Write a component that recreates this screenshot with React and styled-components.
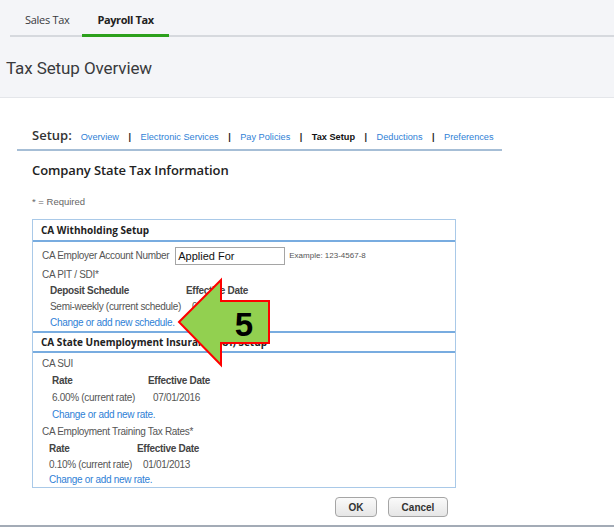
import React from 'react';
import styled, { createGlobalStyle } from 'styled-components';

const GlobalStyle = createGlobalStyle`
  body {
    margin: 0;
    background: #fff;
    font-family: "Liberation Sans", Arial, sans-serif;
    overflow: hidden;
  }
`;

const Page = styled.div`
  position: relative;
  width: 614px;
  height: 527px;
  overflow: hidden;
  border-bottom: 2px solid #a3abb6;
  box-sizing: border-box;
`;

const TopBand = styled.div`
  background: #f4f5f8;
  height: 98px;
  border-bottom: 1px solid #e4e6ea;
  box-sizing: border-box;
`;

const TabRow = styled.div`
  display: flex;
  margin-left: 10px;
  height: 37px;
  border-bottom: 2px solid #d6d9de;
  box-sizing: border-box;
`;

const Tab = styled.div`
  display: flex;
  align-items: center;
  padding: 5px ${p => (p.active ? '15px' : '13px')} 0 15px;
  margin-bottom: -2px;
  font-family: "Open Sans", sans-serif;
  font-size: 11px;
  font-weight: ${p => (p.active ? 700 : 400)};
  color: ${p => (p.active ? '#222' : '#393a3d')};
  border-bottom: 3px solid ${p => (p.active ? '#2ca01c' : 'transparent')};
  letter-spacing: ${p => (p.active ? '-0.4px' : '-0.3px')};
  white-space: nowrap;
`;

const Title = styled.h1`
  margin: 21px 0 0 6px;
  font-family: Roboto, sans-serif;
  font-size: 17px;
  font-weight: 400;
  color: #393a3d;
  letter-spacing: -0.1px;
`;

const Content = styled.div`
  padding: 28px 0 0 17px;
`;

const SetupNav = styled.div`
  display: flex;
  align-items: baseline;
  width: 485px;
  padding: 0 0 5px 15px;
  box-sizing: border-box;
  border-bottom: 2px solid #a6bed6;
  white-space: nowrap;
`;

const SetupLabel = styled.span`
  font-family: "Open Sans", sans-serif;
  font-size: 13px;
  font-weight: 600;
  color: #333;
  margin-right: 9px;
`;

const NavLink = styled.span`
  flex: none;
  font-size: 9.2px;
  color: ${p => (p.current ? '#111' : '#2f7fd6')};
  font-weight: ${p => (p.current ? 700 : 400)};
`;

const Sep = styled.span`
  flex: none;
  font-size: 9px;
  color: #222;
  font-weight: 700;
  margin: 0 9.5px;
`;

const Section = styled.div`
  padding-left: 15px;
`;

const Heading = styled.h2`
  margin: 10px 0 0;
  font-family: "Open Sans", sans-serif;
  font-size: 13px;
  font-weight: 600;
  color: #222;
  letter-spacing: -0.1px;
`;

const Required = styled.div`
  margin-top: 17px;
  font-size: 9.5px;
  color: #666;
`;

const Box = styled.div`
  margin-top: 12px;
  width: 424px;
  border: 1px solid #a9c9e8;
  box-sizing: border-box;
`;

const BoxHeader = styled.div`
  height: 22px;
  display: flex;
  align-items: center;
  padding-left: 8px;
  border-bottom: 2px solid #78ace0;
  border-top: ${p => (p.divider ? '2px solid #78ace0' : 'none')};
  font-family: "Open Sans", sans-serif;
  font-size: 10px;
  font-weight: 700;
  color: #222;
  box-sizing: border-box;
`;

const BoxBody = styled.div`
  padding: ${p => p.pad};
  display: flex;
  flex-direction: column;
`;

const Row = styled.div`
  display: flex;
  align-items: center;
  height: ${p => p.h || 16}px;
  padding-left: ${p => p.indent || 0}px;
  font-size: 10px;
  letter-spacing: -0.3px;
  color: ${p => (p.link ? '#2f7fd6' : '#555')};
  font-weight: ${p => (p.bold ? 700 : 400)};
  white-space: nowrap;
`;

const Cell = styled.span`
  width: ${p => p.w}px;
  flex: none;
  color: ${p => (p.bold ? '#444' : 'inherit')};
`;

const TextInput = styled.div`
  margin-left: 6px;
  width: 110px;
  height: 18px;
  border: 1px solid #a5a5a5;
  box-sizing: border-box;
  display: flex;
  align-items: center;
  padding-left: 2px;
  font-size: 11px;
  letter-spacing: 0;
  color: #111;
`;

const Example = styled.span`
  margin-left: 4px;
  font-size: 8px;
  letter-spacing: 0;
  color: #555;
`;

const Buttons = styled.div`
  display: flex;
  gap: 11px;
  width: 416px;
  justify-content: flex-end;
  margin-top: 9px;
`;

const Btn = styled.button`
  height: 20px;
  width: ${p => p.w}px;
  border: 1px solid #a5a5a5;
  border-radius: 4px;
  background: linear-gradient(#fafafa, #e6e6e6);
  font-family: "Liberation Sans", Arial, sans-serif;
  font-size: 10px;
  font-weight: 700;
  color: #333;
  padding: 0;
`;

const Callout = styled.svg`
  position: absolute;
  left: 0;
  top: 0;
  pointer-events: none;
`;

function Arrow() {
  return (
    <Callout width="614" height="527" viewBox="0 0 614 527">
      <polygon
        points="179,322 221,280 221,301 269,301 269,343 221,343 221,365"
        fill="#92d050"
        stroke="#ff0000"
        strokeWidth="2"
        strokeLinejoin="miter"
      />
      <text
        x="244"
        y="336"
        textAnchor="middle"
        fontFamily="'Liberation Sans', Arial, sans-serif"
        fontWeight="700"
        fontSize="33"
        fill="#000"
      >
        5
      </text>
    </Callout>
  );
}

export default function App() {
  return (
    <Page>
      <GlobalStyle />
      <TopBand>
        <TabRow>
          <Tab>Sales Tax</Tab>
          <Tab active>Payroll Tax</Tab>
        </TabRow>
        <Title>Tax Setup Overview</Title>
      </TopBand>
      <Content>
        <SetupNav>
          <SetupLabel>Setup:</SetupLabel>
          <NavLink>Overview</NavLink>
          <Sep>|</Sep>
          <NavLink>Electronic Services</NavLink>
          <Sep>|</Sep>
          <NavLink>Pay Policies</NavLink>
          <Sep>|</Sep>
          <NavLink current>Tax Setup</NavLink>
          <Sep>|</Sep>
          <NavLink>Deductions</NavLink>
          <Sep>|</Sep>
          <NavLink>Preferences</NavLink>
        </SetupNav>
        <Section>
          <Heading>Company State Tax Information</Heading>
          <Required>* = Required</Required>
          <Box>
            <BoxHeader>CA Withholding Setup</BoxHeader>
            <BoxBody pad="3px 0 1px 9px">
              <Row h={21}>
                CA Employer Account Number
                <TextInput>Applied For</TextInput>
                <Example>Example: 123-4567-8</Example>
              </Row>
              <Row>CA PIT / SDI*</Row>
              <Row indent={8} bold>
                <Cell w={136} bold>Deposit Schedule</Cell>
                <Cell bold>Effective Date</Cell>
              </Row>
              <Row indent={8}>
                <Cell w={142}>Semi-weekly (current schedule)</Cell>
                <Cell>07/01/2016</Cell>
              </Row>
              <Row indent={8} link>Change or add new schedule.</Row>
            </BoxBody>
            <BoxHeader divider>CA State Unemployment Insurance (UI) Setup</BoxHeader>
            <BoxBody pad="2px 0 0 9px">
              <Row h={17}>CA SUI</Row>
              <Row indent={10} h={17} bold>
                <Cell w={96} bold>Rate</Cell>
                <Cell bold>Effective Date</Cell>
              </Row>
              <Row indent={10} h={17}>
                <Cell w={101}>6.00% (current rate)</Cell>
                <Cell>07/01/2016</Cell>
              </Row>
              <Row indent={10} h={17} link>Change or add new rate.</Row>
              <Row h={17}>CA Employment Training Tax Rates*</Row>
              <Row indent={7} bold>
                <Cell w={88} bold>Rate</Cell>
                <Cell bold>Effective Date</Cell>
              </Row>
              <Row indent={7}>
                <Cell w={94}>0.10% (current rate)</Cell>
                <Cell>01/01/2013</Cell>
              </Row>
              <Row indent={7} h={15} link>Change or add new rate.</Row>
            </BoxBody>
          </Box>
          <Buttons>
            <Btn w={42}>OK</Btn>
            <Btn w={60}>Cancel</Btn>
          </Buttons>
        </Section>
      </Content>
      <Arrow />
    </Page>
  );
}
